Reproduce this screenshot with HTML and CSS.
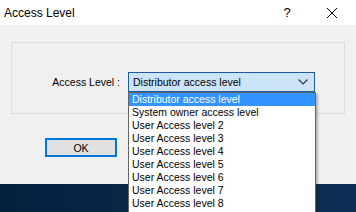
FILE: index.html
```html
<!DOCTYPE html>
<html>
<head>
<meta charset="utf-8" />
<title>Access Level</title>
<link rel="stylesheet" href="styles.css">
</head>
<body>
<div class="titlebar">
  <span class="title">Access Level</span>
  <span class="help">?</span>
  <span class="close">
    <svg width="12" height="12" viewBox="0 0 12 12"><path d="M1 1L11 11M11 1L1 11" stroke="#000" stroke-width="1" fill="none"/></svg>
  </span>
</div>
<div class="dialog">
  <div class="group">
    <div class="row">
      <label for="level">Access Level :</label>
      <div class="combo" id="level">
        <span>Distributor access level</span>
        <svg width="10" height="6" viewBox="0 0 10 6"><path d="M0.5 0.5L5 5L9.5 0.5" stroke="#333" stroke-width="1.1" fill="none"/></svg>
      </div>
    </div>
  </div>
  <div class="actions">
    <button class="ok">OK</button>
  </div>
</div>
<div class="desktop"></div>
<ul class="droplist">
  <li class="sel">Distributor access level</li>
  <li>System owner access level</li>
  <li>User Access level 2</li>
  <li>User Access level 3</li>
  <li>User Access level 4</li>
  <li>User Access level 5</li>
  <li>User Access level 6</li>
  <li>User Access level 7</li>
  <li>User Access level 8</li>
</ul>
</body>
</html>
```

FILE: styles.css
```css
* {
  box-sizing: border-box;
}
body {
  margin: 0;
  width: 356px;
  height: 212px;
  overflow: hidden;
  font-family: 'Liberation Sans', Arial, sans-serif;
  font-size: 11px;
  color: #000;
  position: relative;
}
.titlebar {
  height: 25px;
  background: #fff;
  display: flex;
  align-items: center;
  padding-left: 4px;
}
.title {
  font-size: 12px;
  flex: 1;
}
.help {
  font-size: 13px;
  width: 46px;
  text-align: center;
}
.close {
  width: 46px;
  display: flex;
  justify-content: center;
  padding-right: 2px;
}
.dialog {
  height: 159px;
  background: #f0f0f0;
  padding: 17px 11px 0 11px;
}
.group {
  height: 72px;
  border: 1px solid #dcdcdc;
  width: 334px;
  padding-top: 29px;
}
.row {
  display: flex;
  align-items: center;
}
.row label {
  width: 116px;
  text-align: right;
  padding-right: 8px;
  font-size: 10.5px;
}
.combo {
  width: 187px;
  height: 20px;
  border: 1px solid #1c5b97;
  background: #cce4f7;
  display: flex;
  align-items: center;
  justify-content: space-between;
  padding: 0 6px 0 4px;
  font-size: 10.5px;
}
.actions {
  padding: 24px 0 0 34px;
}
.ok {
  width: 72px;
  height: 19px;
  border: 2px solid #0078d7;
  background: #e1e1e1;
  font-family: 'Liberation Sans', Arial, sans-serif;
  font-size: 10.5px;
  padding: 0;
  line-height: 14px;
}
.desktop {
  height: 28px;
  background: linear-gradient(90deg, #06203f, #0a2a4e 60%, #0d2f55);
}
.droplist {
  position: absolute;
  left: 128px;
  top: 92px;
  width: 188px;
  height: 121px;
  margin: 0;
  padding: 0;
  list-style: none;
  background: #fff;
  border: 1px solid #646464;
  box-shadow: 2px 2px 2px rgba(0, 0, 0, .25);
  font-size: 10.5px;
}
.droplist li {
  height: 13px;
  line-height: 13px;
  padding-left: 3px;
  white-space: nowrap;
}
.droplist .sel {
  background: #3393ff;
  color: #fff;
}
```
